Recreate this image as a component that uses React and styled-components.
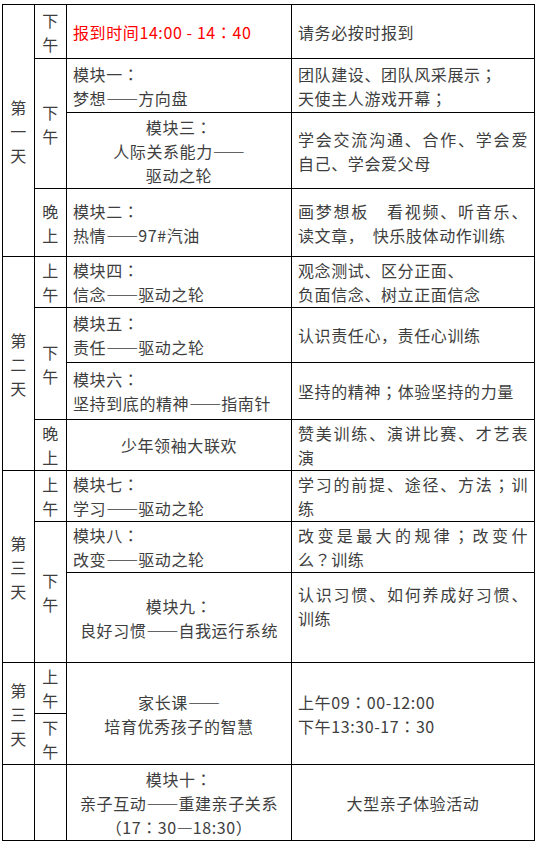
import React from "react";
import styled, { createGlobalStyle } from "styled-components";

const Global = createGlobalStyle`
  html, body { margin: 0; padding: 0; background: #ffffff; }
  body {
    font-family: "Noto Sans CJK SC", "Noto Sans", sans-serif;
    color: #3e3e3e;
  }
`;

const Page = styled.div`
  padding: 4px 0 0 2px;
`;

const Table = styled.table`
  border-collapse: collapse;
  table-layout: fixed;
  width: 532px;
  font-size: 16px;
  line-height: 24px;
  letter-spacing: 0.6px;
`;

const Row = styled.tr`
  height: ${(p) => p.$h}px;
`;

const Cell = styled.td`
  border: 1px solid #000;
  padding: 0 6px;
  vertical-align: middle;
  text-align: ${(p) => (p.$center ? "center" : "justify")};
  color: ${(p) => (p.$red ? "#ff0000" : "#3e3e3e")};
  word-break: break-all;
`;

const Label = styled.td`
  border: 1px solid #000;
  padding: 0 6px;
  vertical-align: middle;
  text-align: center;
  word-break: break-all;
`;

const Line = styled.div`
  min-height: 24px;
`;

const Dash = styled.span`
  font-feature-settings: "fwid";
  letter-spacing: 0;
`;

const Punct = styled.span`
  font-family: "Noto Sans CJK TC", "Noto Sans CJK SC", sans-serif;
`;

function T({ children }) {
  const s = String(children);
  const parts = s.split(/(—+|[：；？])/);
  return (
    <>
      {parts.map((p, i) => {
        if (!p) return null;
        if (/^—+$/.test(p)) return <Dash key={i}>{p}</Dash>;
        if (/^[：；？]$/.test(p)) return <Punct key={i}>{p}</Punct>;
        return <React.Fragment key={i}>{p}</React.Fragment>;
      })}
    </>
  );
}

export default function App() {
  return (
    <Page>
      <Global />
      <Table>
        <colgroup>
          <col style={{ width: 32 }} />
          <col style={{ width: 32 }} />
          <col style={{ width: 225 }} />
          <col style={{ width: 243 }} />
        </colgroup>
        <tbody>
          <Row $h={54}>
            <Label rowSpan={4}>第一天</Label>
            <Label>下午</Label>
            <Cell $red><T>报到时间14:00 - 14：40</T></Cell>
            <Cell>请务必按时报到</Cell>
          </Row>
          <Row $h={54}>
            <Label rowSpan={2}>下午</Label>
            <Cell>
              <Line><T>模块一：</T></Line>
              <Line><T>梦想——方向盘</T></Line>
            </Cell>
            <Cell>
              <Line><T>团队建设、团队风采展示；</T></Line>
              <Line><T>天使主人游戏开幕；</T></Line>
            </Cell>
          </Row>
          <Row $h={76}>
            <Cell $center>
              <Line><T>模块三：</T></Line>
              <Line><T>人际关系能力——</T></Line>
              <Line>驱动之轮</Line>
            </Cell>
            <Cell>学会交流沟通、合作、学会爱自己、学会爱父母</Cell>
          </Row>
          <Row $h={68}>
            <Label>晚上</Label>
            <Cell>
              <Line><T>模块二：</T></Line>
              <Line><T>热情——97#汽油</T></Line>
            </Cell>
            <Cell>画梦想板　看视频、听音乐、读文章，&nbsp; 快乐肢体动作训练</Cell>
          </Row>
          <Row $h={51}>
            <Label rowSpan={4}>第二天</Label>
            <Label>上午</Label>
            <Cell>
              <Line><T>模块四：</T></Line>
              <Line><T>信念——驱动之轮</T></Line>
            </Cell>
            <Cell>
              <Line>观念测试、区分正面、</Line>
              <Line>负面信念、树立正面信念</Line>
            </Cell>
          </Row>
          <Row $h={55}>
            <Label rowSpan={2}>下午</Label>
            <Cell>
              <Line><T>模块五：</T></Line>
              <Line><T>责任——驱动之轮</T></Line>
            </Cell>
            <Cell>认识责任心，责任心训练</Cell>
          </Row>
          <Row $h={57}>
            <Cell>
              <Line><T>模块六：</T></Line>
              <Line><T>坚持到底的精神——指南针</T></Line>
            </Cell>
            <Cell><T>坚持的精神；体验坚持的力量</T></Cell>
          </Row>
          <Row $h={51}>
            <Label>晚上</Label>
            <Cell $center>少年领袖大联欢</Cell>
            <Cell>赞美训练、演讲比赛、才艺表演</Cell>
          </Row>
          <Row $h={51}>
            <Label rowSpan={3}>第三天</Label>
            <Label>上午</Label>
            <Cell>
              <Line><T>模块七：</T></Line>
              <Line><T>学习——驱动之轮</T></Line>
            </Cell>
            <Cell><T>学习的前提、途径、方法；训练</T></Cell>
          </Row>
          <Row $h={51}>
            <Label rowSpan={2}>下午</Label>
            <Cell>
              <Line><T>模块八：</T></Line>
              <Line><T>改变——驱动之轮</T></Line>
            </Cell>
            <Cell><T>改变是最大的规律；改变什么？训练</T></Cell>
          </Row>
          <Row $h={90}>
            <Cell $center>
              <Line><T>模块九：</T></Line>
              <Line><T>良好习惯——自我运行系统</T></Line>
            </Cell>
            <Cell>
              <Line>认识习惯、如何养成好习惯、训练</Line>
              <Line>&nbsp;</Line>
            </Cell>
          </Row>
          <Row $h={51}>
            <Label rowSpan={2}>第三天</Label>
            <Label>上午</Label>
            <Cell $center rowSpan={2}>
              <Line><T>家长课——</T></Line>
              <Line>培育优秀孩子的智慧</Line>
            </Cell>
            <Cell rowSpan={2}>
              <Line><T>上午09：00-12:00</T></Line>
              <Line><T>下午13:30-17：30</T></Line>
            </Cell>
          </Row>
          <Row $h={51}>
            <Label>下午</Label>
          </Row>
          <Row $h={76}>
            <Label />
            <Label />
            <Cell $center>
              <Line><T>模块十：</T></Line>
              <Line><T>亲子互动——重建亲子关系</T></Line>
              <Line><T>（17：30—18:30）</T></Line>
            </Cell>
            <Cell $center>大型亲子体验活动</Cell>
          </Row>
        </tbody>
      </Table>
    </Page>
  );
}
